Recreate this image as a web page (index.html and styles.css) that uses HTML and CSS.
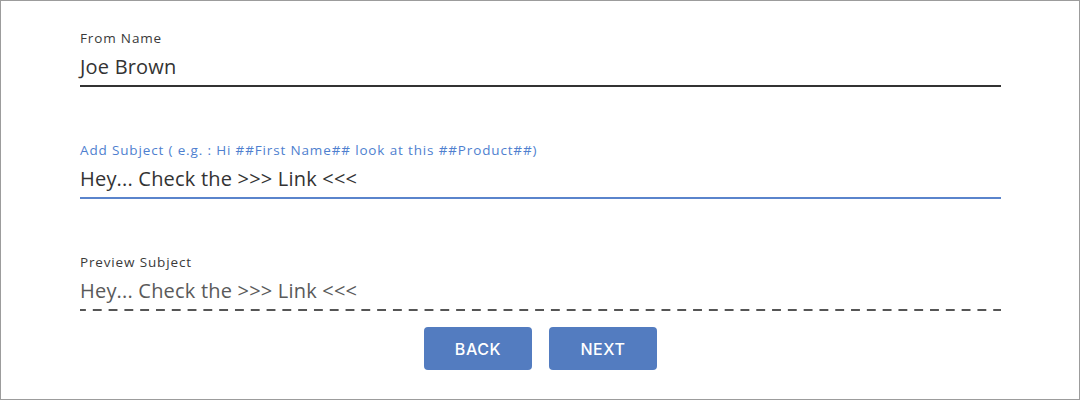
FILE: index.html
```html
<!DOCTYPE html>
<html>
<head>
<meta charset="utf-8">
<link rel="stylesheet" href="styles.css">
</head>
<body>
<div class="frame">
  <div class="field">
    <div class="label">From Name</div>
    <div class="value line-dark">Joe Brown</div>
  </div>
  <div class="field">
    <div class="label label-blue">Add Subject ( e.g. : Hi ##First Name## look at this ##Product##)</div>
    <div class="value line-blue">Hey... Check the &gt;&gt;&gt; Link &lt;&lt;&lt;</div>
  </div>
  <div class="field">
    <div class="label">Preview Subject</div>
    <div class="value value-muted line-dashed">Hey... Check the &gt;&gt;&gt; Link &lt;&lt;&lt;</div>
  </div>
  <div class="actions">
    <button class="btn">BACK</button>
    <button class="btn">NEXT</button>
  </div>
</div>
</body>
</html>
```
FILE: styles.css
```css
html, body {
  margin: 0;
  padding: 0;
  background: #ffffff;
}

.frame {
  box-sizing: border-box;
  width: 1080px;
  height: 400px;
  border: 1px solid #9c9c9c;
  padding: 28px 78px 0 79px;
  font-family: "Open Sans", "Liberation Sans", sans-serif;
  display: flex;
  flex-direction: column;
  gap: 54px;
}

.field {
  display: flex;
  flex-direction: column;
}

.label {
  font-size: 13.5px;
  line-height: 18px;
  letter-spacing: 0.85px;
  color: #3a3a3a;
}

.label-blue {
  color: #4f7fcf;
}

.value {
  margin-top: 6px;
  font-size: 20px;
  line-height: 28px;
  padding-bottom: 4px;
  letter-spacing: 0.2px;
  color: #333333;
}

.value-muted {
  color: #5a5a5a;
}

.line-dark {
  border-bottom: 2px solid #333333;
}

.line-blue {
  border-bottom: 2px solid #5a84cc;
}

.line-dashed {
  padding-bottom: 6px;
  background-image: linear-gradient(to right, #555555 0 8.5px, transparent 8.5px 15.8px);
  background-size: 15.8px 2px;
  background-repeat: repeat-x;
  background-position: -3px 100%;
}

.actions {
  display: flex;
  justify-content: center;
  gap: 17px;
  margin-top: -38px;
}

.btn {
  width: 108px;
  height: 43px;
  border: none;
  border-radius: 4px;
  background: #537cc0;
  color: #ffffff;
  font-family: "Inter", "Open Sans", sans-serif;
  font-size: 16px;
  font-weight: 500;
  letter-spacing: 0.6px;
  padding: 0;
}
```
